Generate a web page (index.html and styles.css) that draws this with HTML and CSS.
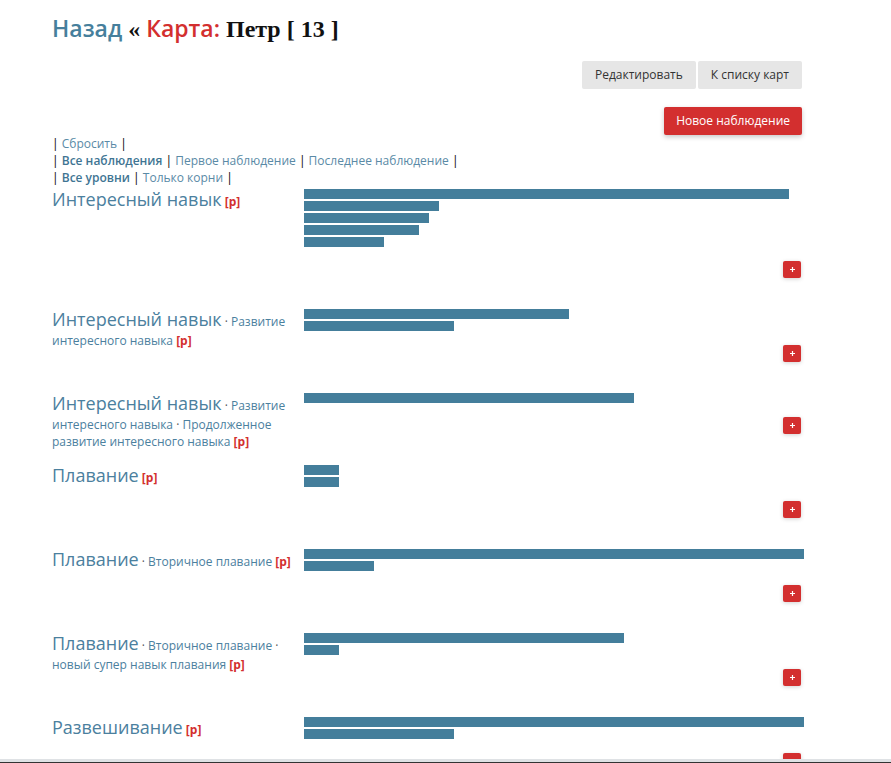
FILE: index.html
```html
<!DOCTYPE html>
<html lang="ru">
<head>
<meta charset="utf-8">
<title>Карта: Петр</title>
<link rel="stylesheet" href="styles.css">
</head>
<body>
<div class="page">
  <h1 class="title"><a class="back" href="#">Назад</a> <span class="sep">«</span> <span class="red">Карта:</span> <span class="name">Петр [ 13 ]</span></h1>

  <div class="actions">
    <a class="btn" href="#">Редактировать</a>
    <a class="btn" href="#">К списку карт</a>
  </div>
  <div class="actions new">
    <a class="btn btn-red" href="#">Новое наблюдение</a>
  </div>

  <div class="filters">
    <div>| <a href="#">Сбросить</a> |</div>
    <div>| <a class="active" href="#">Все наблюдения</a> | <a href="#">Первое наблюдение</a> | <a href="#">Последнее наблюдение</a> |</div>
    <div>| <a class="active" href="#">Все уровни</a> | <a href="#">Только корни</a> |</div>
  </div>

  <div class="rows">
    <div class="row">
      <div class="skill"><a class="main" href="#">Интересный навык</a> <a class="p" href="#">[p]</a></div>
      <div class="right">
        <div class="bar" style="width:485px"></div>
        <div class="bar" style="width:135px"></div>
        <div class="bar" style="width:125px"></div>
        <div class="bar" style="width:115px"></div>
        <div class="bar" style="width:80px"></div>
        <a class="plus" href="#"><svg width="5" height="5" viewBox="0 0 5 5"><path d="M2.5 0V5M0 2.5H5" stroke="#fff" stroke-width="1.2"/></svg></a>
      </div>
    </div>

    <div class="row">
      <div class="skill"><a class="main" href="#">Интересный навык</a> <span class="dot">·</span> <a href="#">Развитие интересного навыка</a> <a class="p" href="#">[p]</a></div>
      <div class="right">
        <div class="bar" style="width:265px"></div>
        <div class="bar" style="width:150px"></div>
        <a class="plus" href="#"><svg width="5" height="5" viewBox="0 0 5 5"><path d="M2.5 0V5M0 2.5H5" stroke="#fff" stroke-width="1.2"/></svg></a>
      </div>
    </div>

    <div class="row">
      <div class="skill"><a class="main" href="#">Интересный навык</a> <span class="dot">·</span> <a href="#">Развитие интересного навыка</a> <span class="dot">·</span> <a href="#">Продолженное развитие интересного навыка</a> <a class="p" href="#">[p]</a></div>
      <div class="right">
        <div class="bar" style="width:330px"></div>
        <a class="plus" href="#"><svg width="5" height="5" viewBox="0 0 5 5"><path d="M2.5 0V5M0 2.5H5" stroke="#fff" stroke-width="1.2"/></svg></a>
      </div>
    </div>

    <div class="row">
      <div class="skill"><a class="main" href="#">Плавание</a> <a class="p" href="#">[p]</a></div>
      <div class="right">
        <div class="bar" style="width:35px"></div>
        <div class="bar" style="width:35px"></div>
        <a class="plus" href="#"><svg width="5" height="5" viewBox="0 0 5 5"><path d="M2.5 0V5M0 2.5H5" stroke="#fff" stroke-width="1.2"/></svg></a>
      </div>
    </div>

    <div class="row">
      <div class="skill"><a class="main" href="#">Плавание</a> <span class="dot">·</span> <a href="#">Вторичное плавание</a> <a class="p" href="#">[p]</a></div>
      <div class="right">
        <div class="bar" style="width:500px"></div>
        <div class="bar" style="width:70px"></div>
        <a class="plus" href="#"><svg width="5" height="5" viewBox="0 0 5 5"><path d="M2.5 0V5M0 2.5H5" stroke="#fff" stroke-width="1.2"/></svg></a>
      </div>
    </div>

    <div class="row">
      <div class="skill"><a class="main" href="#">Плавание</a> <span class="dot">·</span> <a href="#">Вторичное плавание</a> <span class="dot">·</span> <a href="#">новый супер навык плавания</a> <a class="p" href="#">[p]</a></div>
      <div class="right">
        <div class="bar" style="width:320px"></div>
        <div class="bar" style="width:35px"></div>
        <a class="plus" href="#"><svg width="5" height="5" viewBox="0 0 5 5"><path d="M2.5 0V5M0 2.5H5" stroke="#fff" stroke-width="1.2"/></svg></a>
      </div>
    </div>

    <div class="row">
      <div class="skill"><a class="main" href="#">Развешивание</a> <a class="p" href="#">[p]</a></div>
      <div class="right">
        <div class="bar" style="width:500px"></div>
        <div class="bar" style="width:150px"></div>
        <a class="plus" href="#"><svg width="5" height="5" viewBox="0 0 5 5"><path d="M2.5 0V5M0 2.5H5" stroke="#fff" stroke-width="1.2"/></svg></a>
      </div>
    </div>
  </div>
</div>
<div class="footer"></div>
</body>
</html>
```

FILE: styles.css
```css
html, body {
  margin: 0;
  padding: 0;
  background: #fff;
}

body {
  font-family: "Open Sans", "Liberation Sans", sans-serif;
  color: #333;
  font-size: 12px;
}

a {
  text-decoration: none;
}

.page {
  width: 752px;
  margin-left: 52px;
}

.title {
  margin: 0;
  padding-top: 13px;
  font-size: 23px;
  line-height: 30px;
  font-weight: 600;
  color: #111;
  white-space: nowrap;
}

.title .back {
  color: #467f9c;
}

.title .sep {
  font-family: "Liberation Serif", serif;
  font-size: 24px;
  font-weight: 700;
  color: #111;
}

.title .red {
  color: #d32f2f;
}

.title .name {
  font-family: "Liberation Serif", serif;
  font-size: 24px;
  font-weight: 700;
  color: #111;
}

.actions {
  display: flex;
  justify-content: flex-end;
  gap: 2px;
  margin-top: 17px;
  padding-right: 2px;
}

.actions.new {
  margin-top: 18px;
}

.btn {
  display: block;
  height: 28px;
  line-height: 28px;
  padding: 0 13px;
  font-size: 12px;
  color: #333;
  background: #e6e6e6;
  border-radius: 2px;
}

.btn-red {
  padding: 0 12px;
  background: #d32f2f;
  color: #fff;
  box-shadow: 0 2px 5px rgba(0, 0, 0, 0.22);
}

.filters {
  font-size: 12px;
  line-height: 17px;
  color: #000;
}

.filters a {
  color: #5a8aa6;
}

.filters a.active {
  color: #3f7593;
  font-weight: 600;
}

.rows {
  margin-top: 3px;
}

.row {
  display: grid;
  grid-template-columns: 244px 500px;
  column-gap: 8px;
  align-items: start;
}

.skill {
  margin-top: -3px;
  font-size: 12px;
  line-height: 17px;
  color: #4b809e;
}

.skill a {
  color: #4b809e;
}

.skill .main {
  font-size: 18px;
  line-height: 26px;
}

.skill .dot {
  color: #555;
}

.skill .p {
  color: #d32f2f;
  font-weight: 700;
}

.right {
  display: flex;
  flex-direction: column;
  align-items: flex-start;
  padding-bottom: 31px;
}

.bar {
  height: 10px;
  margin-bottom: 2px;
  background: #447e9b;
}

.plus {
  display: flex;
  align-items: center;
  justify-content: center;
  align-self: flex-end;
  width: 18px;
  height: 17px;
  margin-top: 12px;
  margin-right: 3px;
  background: #d32f2f;
  border-radius: 2px;
  box-shadow: 0 1px 4px rgba(0, 0, 0, 0.18);
}

.footer {
  position: fixed;
  left: 0;
  right: 0;
  bottom: 0;
  height: 1px;
  border-top: 3px solid #dfe2e5;
  background: #333;
}
```
